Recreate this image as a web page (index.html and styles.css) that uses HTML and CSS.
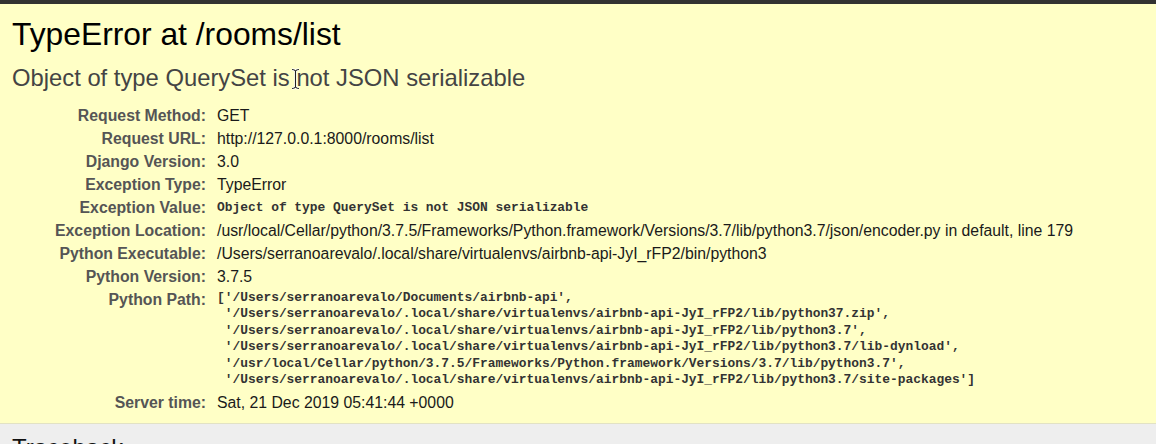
FILE: index.html
```html
<!DOCTYPE html>
<html>
<head>
<meta charset="utf-8">
<title>TypeError at /rooms/list</title>
<link rel="stylesheet" href="styles.css">
</head>
<body>
<div class="topbar"></div>
<div class="summary">
  <h1>TypeError at /rooms/list</h1>
  <h2 class="exc">Object of type QuerySet is<span class="cursor"><svg class="ibeam" width="9" height="22" viewBox="0 0 9 22"><path d="M1 1.5 Q3.5 1.5 4.5 3 Q5.5 1.5 8 1.5 M4.5 3 V19 M1 20.5 Q3.5 20.5 4.5 19 Q5.5 20.5 8 20.5" fill="none" stroke="#fff" stroke-width="2.6"/><path d="M1 1.5 Q3.5 1.5 4.5 3 Q5.5 1.5 8 1.5 M4.5 3 V19 M1 20.5 Q3.5 20.5 4.5 19 Q5.5 20.5 8 20.5" fill="none" stroke="#222" stroke-width="1.1"/></svg></span> not JSON serializable</h2>
  <table class="meta">
    <tr><th>Request Method:</th><td>GET</td></tr>
    <tr><th>Request URL:</th><td>http://127.0.0.1:8000/rooms/list</td></tr>
    <tr><th>Django Version:</th><td>3.0</td></tr>
    <tr><th>Exception Type:</th><td>TypeError</td></tr>
    <tr><th>Exception Value:</th><td><pre class="mono">Object of type QuerySet is not JSON serializable</pre></td></tr>
    <tr><th>Exception Location:</th><td>/usr/local/Cellar/python/3.7.5/Frameworks/Python.framework/Versions/3.7/lib/python3.7/json/encoder.py in default, line 179</td></tr>
    <tr><th>Python Executable:</th><td>/Users/serranoarevalo/.local/share/virtualenvs/airbnb-api-JyI_rFP2/bin/python3</td></tr>
    <tr><th>Python Version:</th><td>3.7.5</td></tr>
    <tr><th>Python Path:</th><td><pre class="mono path">['/Users/serranoarevalo/Documents/airbnb-api',
 '/Users/serranoarevalo/.local/share/virtualenvs/airbnb-api-JyI_rFP2/lib/python37.zip',
 '/Users/serranoarevalo/.local/share/virtualenvs/airbnb-api-JyI_rFP2/lib/python3.7',
 '/Users/serranoarevalo/.local/share/virtualenvs/airbnb-api-JyI_rFP2/lib/python3.7/lib-dynload',
 '/usr/local/Cellar/python/3.7.5/Frameworks/Python.framework/Versions/3.7/lib/python3.7',
 '/Users/serranoarevalo/.local/share/virtualenvs/airbnb-api-JyI_rFP2/lib/python3.7/site-packages']</pre></td></tr>
    <tr><th>Server time:</th><td>Sat, 21 Dec 2019 05:41:44 +0000</td></tr>
  </table>
</div>
<div class="traceback">
  <h2>Traceback</h2>
</div>
</body>
</html>
```

FILE: styles.css
```css
html {
  overflow: hidden;
  height: 444px;
}
html, body {
  margin: 0;
  padding: 0;
}
body {
  font-family: "Liberation Sans", Arial, sans-serif;
  background: #eeeeee;
  color: #000;
  overflow: hidden;
  height: 444px;
}
.topbar {
  height: 4px;
  background: #323232;
}
.summary {
  background: #ffffc6;
  padding: 12px 12px 9px 12px;
  border-bottom: 1px solid #e2e2c4;
}
h1 {
  margin: 0;
  font-weight: normal;
  font-size: 31.8px;
  line-height: 36px;
  color: #000;
}
.exc {
  margin: 12px 0 12px 0;
  font-weight: normal;
  font-size: 23.8px;
  line-height: 28px;
  color: #444;
}
.cursor {
  position: relative;
  display: inline-block;
  width: 0;
  height: 0;
}
.ibeam {
  position: absolute;
  left: 1px;
  top: -18px;
}
table.meta {
  border-collapse: collapse;
  border: none;
}
table.meta th, table.meta td {
  vertical-align: top;
  padding: 2px 0;
  font-size: 15.8px;
  line-height: 19px;
}
table.meta th {
  text-align: right;
  width: 194px;
  padding-right: 11px;
  color: #555;
  font-weight: bold;
  white-space: nowrap;
}
table.meta td {
  color: #1a1a1a;
  white-space: nowrap;
}
pre.mono {
  margin: 0;
  font-family: "Liberation Mono", "Courier New", monospace;
  font-size: 12.9px;
  font-weight: bold;
  color: #333;
}
pre.path {
  line-height: 16.4px;
  padding-bottom: 1px;
}
.traceback {
  padding: 10px 12px;
}
.traceback h2 {
  margin: 0;
  font-weight: normal;
  font-size: 24px;
  line-height: 28px;
  color: #111;
}
```
